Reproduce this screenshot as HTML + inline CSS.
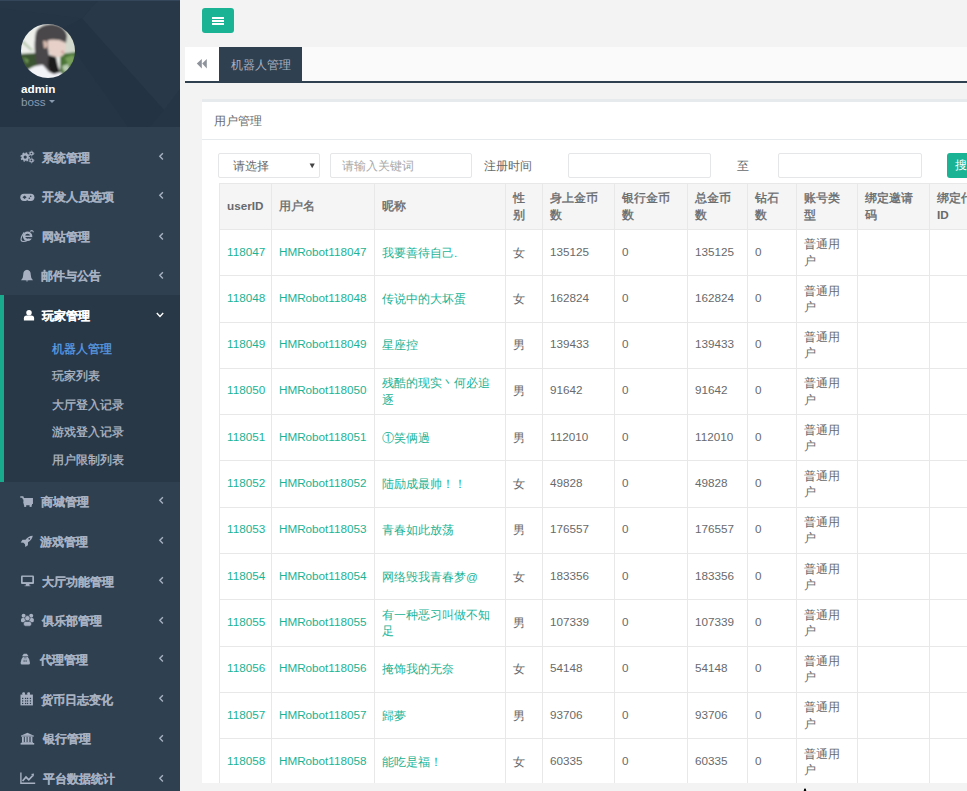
<!DOCTYPE html>
<html><head><meta charset="utf-8">
<style>
*{box-sizing:border-box;margin:0;padding:0}
html,body{width:967px;height:791px;overflow:hidden}
body{background:#f3f3f4;font-family:"Liberation Sans",sans-serif;font-size:11.7px;color:#676a6c;position:relative}
#side{position:absolute;left:0;top:0;width:180px;height:791px;background:#2f4050;overflow:hidden}
#hdr{position:absolute;left:0;top:0;width:180px;height:127px;background:#253444;overflow:hidden}
#hdr svg.pat{position:absolute;left:0;top:0}
#avatar{position:absolute;left:21px;top:24px;width:54px;height:54px;border-radius:50%;overflow:hidden}
#uname{position:absolute;left:21px;top:82px;color:#fff;font-weight:bold;font-size:11.7px;line-height:14px}
#urole{position:absolute;left:21px;top:95px;color:#8a9bb0;font-size:11.7px;line-height:14px}
.caret{display:inline-block;width:0;height:0;border-left:3.5px solid transparent;border-right:3.5px solid transparent;border-top:3.5px solid #8a9bb0;vertical-align:middle;margin-left:3px;margin-top:-2px}
#side .tx{position:absolute;color:#a7b1c2;font-weight:bold;-webkit-text-stroke:0.15px currentColor;font-size:11.7px;line-height:16px;white-space:nowrap}
#side .tx.wh{color:#fff}
#side .ico{position:absolute}
#side .ic{position:absolute;left:21px;width:13px;height:11px}
#side .chev{position:absolute;left:158px}
.mi{position:absolute;left:0;width:180px;height:39.5px;color:#a7b1c2;font-weight:bold;font-size:11.7px}
.mi .ic{position:absolute;left:21px;top:14px}
.mi .tx{position:absolute;top:12px;line-height:16px;white-space:nowrap}
.mi .chev{position:absolute;left:158px;top:13px}
#active{position:absolute;left:0;top:295px;width:180px;height:186.5px;background:#293846;border-left:4px solid #19aa8d}
.sub{position:absolute;left:52px;color:#aeb8c6;-webkit-text-stroke:0.3px currentColor;font-size:11.7px;line-height:16px;white-space:nowrap}
#main{position:absolute;left:180px;top:0;right:0;bottom:0}
#mbtn{position:absolute;left:202px;top:8px;width:32px;height:25px;background:#1ab394;border-radius:3px}
#mbtn i{position:absolute;left:10px;width:12px;height:2px;background:#fff}
#tabs{position:absolute;left:185px;top:47px;width:782px;height:36px;background:#fafafa;border-bottom:2px solid #2f4050}
#roll{position:absolute;left:0;top:0;width:34px;height:34px;background:#fff}
#tab1{position:absolute;left:34px;top:0;width:83px;height:34px;background:#2f4050;color:#a7b1c2;font-size:11.7px;line-height:16px}
#tab1 span{position:absolute;left:12px;top:10px;white-space:nowrap}
#ibox{position:absolute;left:202px;top:99px;width:765px;height:684px;background:#fff;border-top:3px solid #e7eaec}
#ititle{position:absolute;left:0;top:0;width:765px;height:38px;border-bottom:1px solid #e7eaec}
#ititle span{position:absolute;left:12px;top:11px;line-height:16px}
.inp{position:absolute;top:153px;height:25px;border:1px solid #e5e6e7;border-radius:2px;background:#fff}
.lbl{position:absolute;top:158px;line-height:16px;white-space:nowrap}
#tbl{position:absolute;left:219px;top:183px;width:781px;border-collapse:collapse;table-layout:fixed}
#tbl th,#tbl td{border:1px solid #e8e8e8;padding:0 7px;text-align:left;vertical-align:middle;line-height:16px;font-size:11.7px}
#tbl th{background:#f5f5f6;height:46px;font-weight:normal;color:#676a6c;-webkit-text-stroke:0.35px currentColor}
#tbl th.b,#tbl th b{font-weight:bold;-webkit-text-stroke:0}
#tbl td{height:46.3px}
#tbl th,#tbl td{line-height:16.2px}
#sbtn{position:absolute;left:947px;top:153px;width:60px;height:25px;background:#1ab394;border-radius:3px;color:#fff;overflow:hidden}
#sbtn span{position:absolute;left:8px;top:4px;line-height:16px}
#clip{position:absolute;left:0;top:0;width:967px;height:783px;overflow:hidden}
#tbl td.n{padding-bottom:2px}
#tbl td.g{color:#1ab394}
</style></head><body>
<div id="side">
  <div id="hdr"><svg class="pat" width="180" height="127" viewBox="0 0 180 127">
<rect width="180" height="127" fill="#253545"/>
<polygon points="98,0 180,0 180,89 164,110 82,18.5" fill="#283848"/>
<polygon points="82,18.5 164,110 150,127 128,127 60,30" fill="#223242" opacity="0.5"/>
<polygon points="0,0 98,0 82,18.5 0,8" fill="#263646"/>
<rect x="0" y="0" width="180" height="1" fill="#33465a"/>
</svg>
<div id="avatar"><svg width="54" height="54" viewBox="0 0 54 54">
<defs><filter id="bl" x="-10%" y="-10%" width="120%" height="120%"><feGaussianBlur stdDeviation="0.9"/></filter></defs>
<g filter="url(#bl)">
<rect x="-2" y="-2" width="58" height="58" fill="#eef0ec"/>
<rect x="38" y="6" width="18" height="26" fill="#d3dacd"/>
<path d="M2 16 L12 26 L10 27 L1 19Z" fill="#b8c9ae"/>
<path d="M-2 30 L16 29 L18 40 L14 48 L-2 48Z" fill="#3a5530"/>
<path d="M2 33 L8 36 L6 40Z" fill="#6d9655"/>
<path d="M39 30 L56 28 L56 50 L44 56 L39 50Z" fill="#4b7439"/>
<path d="M44 34 L52 31 L55 37 L48 42Z" fill="#77a05a"/>
<path d="M41 42 L47 40 L49 46 L43 48Z" fill="#b9cdb0"/>
<path d="M15 8 Q19 0 31 0 Q44 1 46 12 L45 19 L38 16 L30 17 L27 23 L28 32 L31 40 L34 48 L20 50 Q14 42 14 30 Q13 18 15 8Z" fill="#4a4648"/>
<path d="M26.5 16.5 Q35 14 44 18.5 Q45.5 26 43 30 Q40 34 35 33 L30 31.5 Q26.5 26 26.5 16.5Z" fill="#e6d0c7"/>
<path d="M22 17 Q26 16 26.5 21 Q26 25 23 24Z" fill="#d9bcb0"/>
<path d="M28 31 L35 33 L37 42 L40 50 L31 51 L27 42Z" fill="#1f1c1d"/>
<path d="M5 47 Q14 40 22 41 L28 48 L33 50 L40 48 L43 54 L8 56Z" fill="#f2f3f7"/>
<circle cx="41.5" cy="28" r="0.9" fill="#b84a55"/>
</g></svg></div>
<div id="uname">admin</div>
<div id="urole">boss<i class="caret"></i></div>
</div>
<div id="active"></div>
<div class="tx" style="left:42px;top:150.1px">系统管理</div><svg class="ico" style="left:20px;top:150px" width="15" height="14" viewBox="0 0 15 14"><g fill="#a7b1c2"><circle cx="5.2" cy="7.06" r="3.7"/><circle cx="5.2" cy="7.06" r="4.1" fill="none" stroke="#a7b1c2" stroke-width="1.3" stroke-dasharray="1.7 1.52"/><circle cx="5.2" cy="7.06" r="1.6" fill="#2f4050"/>
<circle cx="11.4" cy="3.5" r="2.0"/><circle cx="11.4" cy="3.5" r="2.4" fill="none" stroke="#a7b1c2" stroke-width="0.9" stroke-dasharray="1.2 1.31"/><circle cx="11.4" cy="3.5" r="0.85" fill="#2f4050"/>
<circle cx="11.4" cy="10.4" r="2.0"/><circle cx="11.4" cy="10.4" r="2.4" fill="none" stroke="#a7b1c2" stroke-width="0.9" stroke-dasharray="1.2 1.31"/><circle cx="11.4" cy="10.4" r="0.85" fill="#2f4050"/></g></svg><svg class="chev" style="top:152.3px" width="6" height="8" viewBox="0 0 6 8"><polyline points="4.9,1.2 1.8,4.3 4.9,7.4" fill="none" stroke="#a7b1c2" stroke-width="1.4"/></svg>
<div class="tx" style="left:42px;top:189.2px">开发人员选项</div><svg class="ico" style="left:20px;top:193px" width="15" height="9" viewBox="0 0 15 9"><rect x="0.3" y="0.7" width="14.1" height="7.2" rx="3.6" fill="#a7b1c2"/><path d="M2.5 4.3 L4.6 2.5 L6.6 4.3 L4.6 6.1Z" fill="#2f4050"/><circle cx="10.7" cy="3.2" r="0.8" fill="#2f4050"/><circle cx="9.3" cy="5.3" r="0.8" fill="#2f4050"/><path d="M6 7.9 Q7.3 6.6 8.6 7.9Z" fill="#2f4050"/></svg><svg class="chev" style="top:191.4px" width="6" height="8" viewBox="0 0 6 8"><polyline points="4.9,1.2 1.8,4.3 4.9,7.4" fill="none" stroke="#a7b1c2" stroke-width="1.4"/></svg>
<div class="tx" style="left:41.5px;top:229.3px">网站管理</div><svg class="ico" style="left:20px;top:229px" width="14" height="14" viewBox="0 0 14 14"><circle cx="7.6" cy="7.3" r="3.6" fill="none" stroke="#a7b1c2" stroke-width="2.3"/><rect x="4.8" y="6.6" width="6" height="1.4" fill="#a7b1c2"/><rect x="8.8" y="8.1" width="3.6" height="1.5" fill="#2f4050"/><path d="M4.2 3.4 Q0.2 9 1.3 11.6 Q2.6 13.6 8.5 11" fill="none" stroke="#a7b1c2" stroke-width="1.1"/><path d="M10 2.4 Q13 0.6 13.3 3.2" fill="none" stroke="#a7b1c2" stroke-width="1.1"/></svg><svg class="chev" style="top:231.5px" width="6" height="8" viewBox="0 0 6 8"><polyline points="4.9,1.2 1.8,4.3 4.9,7.4" fill="none" stroke="#a7b1c2" stroke-width="1.4"/></svg>
<div class="tx" style="left:41px;top:268.3px">邮件与公告</div><svg class="ico" style="left:20px;top:269px" width="14" height="14" viewBox="0 0 14 14"><path d="M7 0.8 Q3.2 1.2 3.2 6 Q3.2 9.5 1 11.2 L13 11.2 Q10.8 9.5 10.8 6 Q10.8 1.2 7 0.8Z" fill="#a7b1c2"/><path d="M5.6 11.6 Q7 13.6 8.4 11.6Z" fill="#a7b1c2"/></svg><svg class="chev" style="top:270.5px" width="6" height="8" viewBox="0 0 6 8"><polyline points="4.9,1.2 1.8,4.3 4.9,7.4" fill="none" stroke="#a7b1c2" stroke-width="1.4"/></svg>
<div class="tx" style="left:40.6px;top:494.1px">商城管理</div><svg class="ico" style="left:20px;top:496px" width="14" height="12" viewBox="0 0 14 12"><path d="M0.3 1 L2.8 1 L3.4 2.8 L12.2 2.8 L12.2 7.3 L4.4 7.3 L4.6 8.5 L12 8.5" fill="none" stroke="#a7b1c2" stroke-width="1.5"/><rect x="3.4" y="2.8" width="8.8" height="4.5" fill="#a7b1c2"/><rect x="4.2" y="9" width="2" height="1.9" fill="#a7b1c2"/><rect x="9.6" y="9" width="2" height="1.9" fill="#a7b1c2"/></svg><svg class="chev" style="top:496.3px" width="6" height="8" viewBox="0 0 6 8"><polyline points="4.9,1.2 1.8,4.3 4.9,7.4" fill="none" stroke="#a7b1c2" stroke-width="1.4"/></svg>
<div class="tx" style="left:40px;top:534.2px">游戏管理</div><svg class="ico" style="left:20px;top:535px" width="14" height="13" viewBox="0 0 14 13"><path d="M12.8 0.7 Q8 1 5.5 4.8 L2.5 4.8 L0.7 7.5 L3.5 7.8 L5 9.3 L5.3 12 L7.9 10.3 L8 7.3 Q12 4.8 12.8 0.7Z" fill="#a7b1c2"/><circle cx="9.3" cy="3.8" r="0.9" fill="#2f4050"/></svg><svg class="chev" style="top:536.4px" width="6" height="8" viewBox="0 0 6 8"><polyline points="4.9,1.2 1.8,4.3 4.9,7.4" fill="none" stroke="#a7b1c2" stroke-width="1.4"/></svg>
<div class="tx" style="left:42px;top:573.6px">大厅功能管理</div><svg class="ico" style="left:20px;top:575px" width="15" height="12" viewBox="0 0 15 12"><rect x="1" y="0.6" width="13" height="8.3" rx="1" fill="#a7b1c2"/><rect x="2.7" y="1.9" width="9.6" height="5.2" fill="#2f4050"/><rect x="5.8" y="9" width="3.6" height="1.9" fill="#a7b1c2"/><rect x="4.5" y="10.6" width="6" height="0.6" fill="#a7b1c2"/></svg><svg class="chev" style="top:575.8px" width="6" height="8" viewBox="0 0 6 8"><polyline points="4.9,1.2 1.8,4.3 4.9,7.4" fill="none" stroke="#a7b1c2" stroke-width="1.4"/></svg>
<div class="tx" style="left:42px;top:613.3px">俱乐部管理</div><svg class="ico" style="left:20px;top:613px" width="15" height="14" viewBox="0 0 15 14"><circle cx="3.6" cy="2.8" r="2" fill="#a7b1c2"/><circle cx="11.2" cy="2.8" r="2" fill="#a7b1c2"/><rect x="1" y="4.9" width="4.6" height="4.4" rx="1.5" fill="#a7b1c2"/><rect x="9.2" y="4.9" width="4.6" height="4.4" rx="1.5" fill="#a7b1c2"/><circle cx="7.4" cy="5.2" r="2.6" fill="#a7b1c2" stroke="#2f4050" stroke-width="0.6"/><rect x="3.6" y="8.4" width="7.8" height="4.8" rx="1.8" fill="#a7b1c2" stroke="#2f4050" stroke-width="0.6"/></svg><svg class="chev" style="top:615.5px" width="6" height="8" viewBox="0 0 6 8"><polyline points="4.9,1.2 1.8,4.3 4.9,7.4" fill="none" stroke="#a7b1c2" stroke-width="1.4"/></svg>
<div class="tx" style="left:39.5px;top:652.1px">代理管理</div><svg class="ico" style="left:20px;top:653px" width="12" height="13" viewBox="0 0 12 13"><path d="M3.8 0.8 L6.8 0.8 L8.6 3.2 L2 3.2Z" fill="#a7b1c2"/><path d="M3.2 3.8 L7.6 3.8 Q10 6 10 10 Q10 11.6 8.6 11.6 L2 11.6 Q0.6 11.6 0.6 10 Q0.6 6 3.2 3.8Z" fill="#a7b1c2"/><rect x="3.8" y="4.3" width="2.8" height="1" fill="#2f4050" opacity="0.6"/><rect x="3.6" y="6.8" width="1" height="2.2" fill="#2f4050" opacity="0.7"/><rect x="5.6" y="6.8" width="1" height="2.2" fill="#2f4050" opacity="0.7"/></svg><svg class="chev" style="top:654.3px" width="6" height="8" viewBox="0 0 6 8"><polyline points="4.9,1.2 1.8,4.3 4.9,7.4" fill="none" stroke="#a7b1c2" stroke-width="1.4"/></svg>
<div class="tx" style="left:40.6px;top:691.8px">货币日志变化</div><svg class="ico" style="left:20px;top:692px" width="14" height="14" viewBox="0 0 14 14"><rect x="0.5" y="2.6" width="12.4" height="10.8" fill="#a7b1c2"/><rect x="2.3" y="0.3" width="2.7" height="3" rx="1" fill="#a7b1c2"/><rect x="7.3" y="0.3" width="2.7" height="3" rx="1" fill="#a7b1c2"/><g fill="#2f4050"><rect x="2.0" y="5.8" width="1.3" height="1.3"/><rect x="4.9" y="5.8" width="1.3" height="1.3"/><rect x="6.9" y="5.8" width="1.3" height="1.3"/><rect x="9.8" y="5.8" width="1.3" height="1.3"/><rect x="2.0" y="8.3" width="1.3" height="1.3"/><rect x="4.9" y="8.3" width="1.3" height="1.3"/><rect x="6.9" y="8.3" width="1.3" height="1.3"/><rect x="9.8" y="8.3" width="1.3" height="1.3"/><rect x="2.0" y="10.8" width="1.3" height="1.3"/><rect x="4.9" y="10.8" width="1.3" height="1.3"/><rect x="6.9" y="10.8" width="1.3" height="1.3"/><rect x="9.8" y="10.8" width="1.3" height="1.3"/></g></svg><svg class="chev" style="top:694.0px" width="6" height="8" viewBox="0 0 6 8"><polyline points="4.9,1.2 1.8,4.3 4.9,7.4" fill="none" stroke="#a7b1c2" stroke-width="1.4"/></svg>
<div class="tx" style="left:43.1px;top:731.3px">银行管理</div><svg class="ico" style="left:20px;top:732px" width="15" height="13" viewBox="0 0 15 13"><path d="M7.4 0.8 L14 3.8 L0.8 3.8Z" fill="#a7b1c2"/><rect x="1" y="3.6" width="12.8" height="1" fill="#a7b1c2"/><g fill="#a7b1c2"><rect x="2" y="4.6" width="1.8" height="5.8"/><rect x="4.8" y="4.6" width="1.8" height="5.8"/><rect x="7.6" y="4.6" width="1.8" height="5.8"/><rect x="10.6" y="4.6" width="1.8" height="5.8"/></g><rect x="1.6" y="10.2" width="11.4" height="0.9" fill="#a7b1c2"/><rect x="0.6" y="11" width="13.6" height="1.6" fill="#a7b1c2"/></svg><svg class="chev" style="top:733.5px" width="6" height="8" viewBox="0 0 6 8"><polyline points="4.9,1.2 1.8,4.3 4.9,7.4" fill="none" stroke="#a7b1c2" stroke-width="1.4"/></svg>
<div class="tx" style="left:43.1px;top:771.4px">平台数据统计</div><svg class="ico" style="left:20px;top:772px" width="16" height="13" viewBox="0 0 16 13"><path d="M0.9 0.4 L0.9 11.2 L15.2 11.2" fill="none" stroke="#a7b1c2" stroke-width="1.4"/><path d="M2.6 9 L6 5 L8.8 7.8 L12.8 3.5" fill="none" stroke="#a7b1c2" stroke-width="1.8"/><path d="M11 1.9 L14 1.4 L13.6 4.6Z" fill="#a7b1c2"/></svg><svg class="chev" style="top:773.6px" width="6" height="8" viewBox="0 0 6 8"><polyline points="4.9,1.2 1.8,4.3 4.9,7.4" fill="none" stroke="#a7b1c2" stroke-width="1.4"/></svg>
<svg class="ico" style="left:22px;top:308px" width="14" height="14" viewBox="0 0 14 14"><circle cx="7" cy="4.7" r="2.75" fill="#fff"/><path d="M1.9 12.5 L1.9 10.2 Q1.9 7.5 4.7 7.5 L9.3 7.5 Q12.1 7.5 12.1 10.2 L12.1 12.5Z" fill="#fff"/></svg><svg class="chev" style="left:156px;top:312px" width="8" height="6" viewBox="0 0 8 6"><polyline points="0.8,1 4,4.4 7.2,1" fill="none" stroke="#fff" stroke-width="1.4"/></svg><div class="tx wh" style="left:42px;top:308.1px">玩家管理</div>
<div class="sub" style="left:52px;top:340.9px;color:#5a9ee6">机器人管理</div>
<div class="sub" style="left:52px;top:368.2px">玩家列表</div>
<div class="sub" style="left:52px;top:396.5px">大厅登入记录</div>
<div class="sub" style="left:52px;top:424.1px">游戏登入记录</div>
<div class="sub" style="left:52px;top:451.5px">用户限制列表</div>

</div>
<div id="mbtn"><i style="top:9px"></i><i style="top:12px"></i><i style="top:15px"></i></div>
<div id="tabs">
  <div id="roll"><svg style="position:absolute;left:11px;top:11px" width="12" height="12" viewBox="0 0 12 12"><path d="M0.8 5.6 L5.8 0.9 L5.8 10.6Z M6.2 5.6 L10.8 0.9 L10.8 10.6Z" fill="#8e939b"/></svg></div>
  <div id="tab1"><span>机器人管理</span></div>
</div>
<div id="ibox">
  <div id="ititle"><span>用户管理</span></div>
</div>
<div id="clip">
<div class="inp" style="left:218px;width:102px"><span style="position:absolute;left:14px;top:4px;line-height:16px;color:#676a6c">请选择</span><svg style="position:absolute;left:89.5px;top:9px" width="7" height="6" viewBox="0 0 7 6"><path d="M0.6 0.6 L5.8 0.6 L3.2 5.2Z" fill="#444"/></svg></div>
<div class="inp" style="left:330px;width:142px"><span style="position:absolute;left:11px;top:4px;line-height:16px;color:#a9a9a9">请输入关键词</span></div>
<div class="lbl" style="left:484px">注册时间</div>
<div class="inp" style="left:568px;width:143px"></div>
<div class="lbl" style="left:737px">至</div>
<div class="inp" style="left:778px;width:144px"></div>
<div id="sbtn"><span>搜索</span></div>
<table id="tbl"><colgroup><col style="width:52px"><col style="width:103px"><col style="width:131px"><col style="width:37px"><col style="width:72px"><col style="width:73px"><col style="width:60px"><col style="width:49px"><col style="width:61px"><col style="width:72px"><col style="width:71px"></colgroup><tr><th class="b">userID</th><th>用户名</th><th>昵称</th><th>性别</th><th>身上金币数</th><th>银行金币数</th><th>总金币数</th><th>钻石数</th><th>账号类型</th><th>绑定邀请码</th><th>绑定代理<b>ID</b></th></tr>
<tr><td class="g n">118047</td><td class="g n">HMRobot118047</td><td class="g">我要善待自己.</td><td>女</td><td class="n">135125</td><td class="n">0</td><td class="n">135125</td><td class="n">0</td><td>普通用户</td><td></td><td></td></tr>
<tr><td class="g n">118048</td><td class="g n">HMRobot118048</td><td class="g">传说中的大坏蛋</td><td>女</td><td class="n">162824</td><td class="n">0</td><td class="n">162824</td><td class="n">0</td><td>普通用户</td><td></td><td></td></tr>
<tr><td class="g n">118049</td><td class="g n">HMRobot118049</td><td class="g">星座控</td><td>男</td><td class="n">139433</td><td class="n">0</td><td class="n">139433</td><td class="n">0</td><td>普通用户</td><td></td><td></td></tr>
<tr><td class="g n">118050</td><td class="g n">HMRobot118050</td><td class="g">残酷的现实丶何必追逐</td><td>男</td><td class="n">91642</td><td class="n">0</td><td class="n">91642</td><td class="n">0</td><td>普通用户</td><td></td><td></td></tr>
<tr><td class="g n">118051</td><td class="g n">HMRobot118051</td><td class="g">①笑俩過</td><td>男</td><td class="n">112010</td><td class="n">0</td><td class="n">112010</td><td class="n">0</td><td>普通用户</td><td></td><td></td></tr>
<tr><td class="g n">118052</td><td class="g n">HMRobot118052</td><td class="g">陆励成最帅！！</td><td>女</td><td class="n">49828</td><td class="n">0</td><td class="n">49828</td><td class="n">0</td><td>普通用户</td><td></td><td></td></tr>
<tr><td class="g n">118053</td><td class="g n">HMRobot118053</td><td class="g">青春如此放荡</td><td>男</td><td class="n">176557</td><td class="n">0</td><td class="n">176557</td><td class="n">0</td><td>普通用户</td><td></td><td></td></tr>
<tr><td class="g n">118054</td><td class="g n">HMRobot118054</td><td class="g">网络毁我青春梦@</td><td>女</td><td class="n">183356</td><td class="n">0</td><td class="n">183356</td><td class="n">0</td><td>普通用户</td><td></td><td></td></tr>
<tr><td class="g n">118055</td><td class="g n">HMRobot118055</td><td class="g">有一种恶习叫做不知足</td><td>男</td><td class="n">107339</td><td class="n">0</td><td class="n">107339</td><td class="n">0</td><td>普通用户</td><td></td><td></td></tr>
<tr><td class="g n">118056</td><td class="g n">HMRobot118056</td><td class="g">掩饰我的无奈</td><td>女</td><td class="n">54148</td><td class="n">0</td><td class="n">54148</td><td class="n">0</td><td>普通用户</td><td></td><td></td></tr>
<tr><td class="g n">118057</td><td class="g n">HMRobot118057</td><td class="g">歸夢</td><td>男</td><td class="n">93706</td><td class="n">0</td><td class="n">93706</td><td class="n">0</td><td>普通用户</td><td></td><td></td></tr>
<tr><td class="g n">118058</td><td class="g n">HMRobot118058</td><td class="g">能吃是福！</td><td>女</td><td class="n">60335</td><td class="n">0</td><td class="n">60335</td><td class="n">0</td><td>普通用户</td><td></td><td></td></tr>
</table>
</div>
<svg style="position:absolute;left:802px;top:788px" width="6" height="3" viewBox="0 0 6 3"><path d="M2.2 0.8 Q3 0 3.8 0.8 L4.3 3 L1.7 3Z" fill="#000"/></svg>
</body></html>
